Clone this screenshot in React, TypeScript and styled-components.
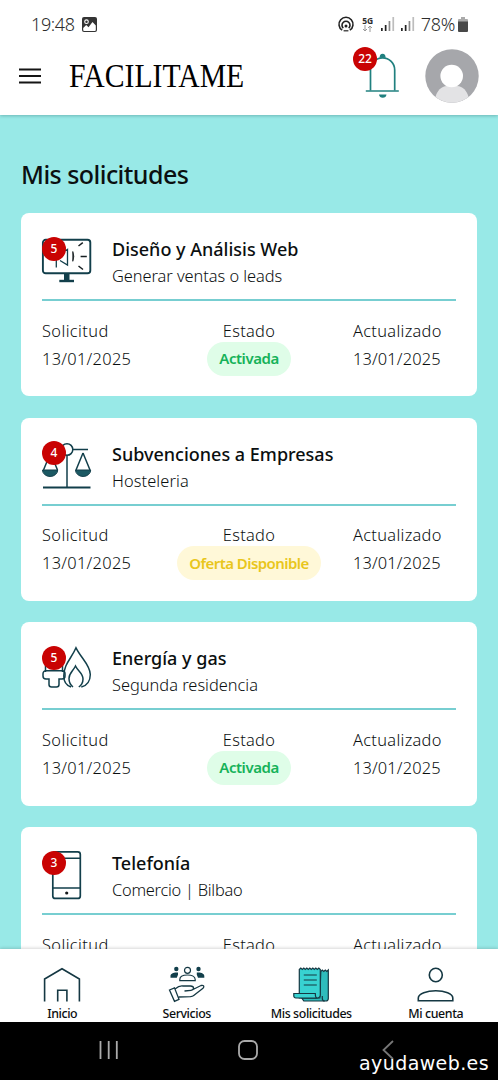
import React from "react";
import styled, { createGlobalStyle } from "styled-components";

const GlobalStyle = createGlobalStyle`
  *, *::before, *::after { box-sizing: border-box; }
  html, body { margin: 0; padding: 0; }
  body { font-family: "Noto Sans", "Open Sans", sans-serif; color: #0b0f10; overflow: hidden; }
  h1, h2, p { margin: 0; }
  svg { display: block; overflow: visible; flex: none; }
`;

const ink = "#123f4b";

const Screen = styled.div`
  width: 498px;
  height: 1080px;
  display: flex;
  flex-direction: column;
  overflow: hidden;
  background: #98e9e7;
`;

const TopArea = styled.header`
  flex: none;
  height: 115px;
  background: #fff;
  box-shadow: 0 1px 3px rgba(0, 60, 60, 0.28);
  z-index: 1;
`;

const StatusBar = styled.div`
  height: 48px;
  padding: 0 30px 0 31px;
  display: flex;
  align-items: center;
  color: #2c2c2c;
`;

const StatusText = styled.span<{ $gap?: number }>`
  font-size: 18px;
  font-weight: 300;
  line-height: 24px;
  letter-spacing: ${(p) => p.$gap ?? 0}px;
  white-space: nowrap;
`;

const StatusIcons = styled.div`
  margin-left: auto;
  display: flex;
  align-items: center;
`;

const Network = styled.div`
  width: 14px;
  margin: 0 6px 0 7px;
  display: flex;
  flex-direction: column;
  align-items: center;
  font-size: 8.5px;
  font-weight: 700;
  line-height: 8px;
`;

const AppBar = styled.div`
  height: 56px;
  padding: 0 19px;
  display: flex;
  align-items: center;
`;

const Brand = styled.h1`
  width: 176px;
  margin-left: 28px;
  font-family: "Liberation Serif", serif;
  font-size: 33px;
  font-weight: 400;
  line-height: 40px;
  color: #000;
  white-space: nowrap;
  transform: scaleX(0.9);
  transform-origin: left center;
`;

const BellButton = styled.button`
  position: relative;
  width: 36px;
  height: 46px;
  margin-left: auto;
  padding: 0;
  border: 0;
  background: none;
`;

const CountBadge = styled.span<{ $x: number; $y: number; $size: number }>`
  position: absolute;
  left: ${(p) => p.$x}px;
  top: ${(p) => p.$y}px;
  width: ${(p) => p.$size}px;
  height: ${(p) => p.$size}px;
  border-radius: 50%;
  display: flex;
  align-items: center;
  justify-content: center;
  background: #c90303;
  color: #fff;
  font-family: "Noto Sans", sans-serif;
  font-size: 12px;
  font-weight: 500;
  line-height: 1;
`;

const Avatar = styled.div`
  margin-left: 24.5px;
`;

const Content = styled.main`
  flex: 1;
  min-height: 0;
  overflow: hidden;
  padding: 42px 21px 0;
`;

const PageTitle = styled.h2`
  height: 56px;
  font-size: 25px;
  font-weight: 500;
  line-height: 34px;
  letter-spacing: -0.55px;
  white-space: nowrap;
`;

const CardList = styled.div`
  display: flex;
  flex-direction: column;
  gap: 21.4px;
`;

const Card = styled.article`
  flex: none;
  height: 183.3px;
  padding: 21px;
  border-radius: 8px;
  background: #fff;
`;

const CardHead = styled.div`
  height: 67px;
  padding-top: 3px;
  display: flex;
  gap: 20px;
  border-bottom: 2px solid #77ced1;
`;

const CardIcon = styled.div`
  position: relative;
  width: 50px;
  height: 50px;
`;

const CardTitles = styled.div`
  margin-top: -1px;
`;

const CardName = styled.p`
  font-size: 18px;
  font-weight: 500;
  line-height: 26px;
  white-space: nowrap;
`;

const CardDetail = styled.p<{ $track: number }>`
  font-size: 16.4px;
  font-weight: 300;
  line-height: 27px;
  letter-spacing: ${(p) => p.$track}px;
  white-space: nowrap;
`;

const CardFacts = styled.div`
  height: 74px;
  padding-top: 15.5px;
  display: grid;
  grid-template-columns: 89px 1fr 89px;
  padding-right: 14px;
`;

const Fact = styled.div<{ $center?: boolean }>`
  display: flex;
  flex-direction: column;
  align-items: ${(p) => (p.$center ? "center" : "flex-start")};
  margin-left: ${(p) => (p.$center ? "14px" : "0")};
`;

const FactLabel = styled.span<{ $track?: number }>`
  font-size: 16.4px;
  font-weight: 300;
  line-height: 28px;
  letter-spacing: ${(p) => p.$track ?? 0.3}px;
  white-space: nowrap;
`;

const StatusPill = styled.span<{ $offer: boolean }>`
  width: ${(p) => (p.$offer ? 144 : 84)}px;
  height: 34px;
  margin-top: -3px;
  padding-bottom: 1px;
  border-radius: 17px;
  display: flex;
  align-items: center;
  justify-content: center;
  background: ${(p) => (p.$offer ? "#fff8d8" : "#dffde8")};
  color: ${(p) => (p.$offer ? "#e9c61c" : "#16b259")};
  font-size: 15px;
  font-weight: 600;
  letter-spacing: ${(p) => (p.$offer ? -0.55 : -0.45)}px;
  white-space: nowrap;
`;

const BottomNav = styled.nav`
  flex: none;
  height: 73px;
  display: grid;
  grid-template-columns: repeat(4, 1fr);
  background: #fff;
  box-shadow: 0 -1px 3px rgba(0, 0, 0, 0.16);
  z-index: 1;
`;

const NavItem = styled.a`
  padding-top: 16px;
  display: flex;
  flex-direction: column;
  align-items: center;
  color: #0b0f10;
`;

const NavLabel = styled.span`
  margin-top: 3px;
  font-size: 12.4px;
  font-weight: 500;
  line-height: 16px;
  letter-spacing: -0.4px;
  white-space: nowrap;
`;

const SystemBar = styled.footer`
  position: relative;
  flex: none;
  height: 58px;
  padding: 18px 0 0 99px;
  display: flex;
  gap: 119px;
  background: #000;
`;

const BackKey = styled.div`
  margin-left: 5px;
`;

const Watermark = styled.span`
  position: absolute;
  right: 9px;
  top: 28px;
  color: #fff;
  font-family: "DejaVu Sans", sans-serif;
  font-size: 19px;
  line-height: 26px;
  letter-spacing: 0.4px;
  white-space: nowrap;
`;

const PictureIcon = () => (
  <svg width="15" height="15" viewBox="0 0 15 15" style={{ marginLeft: 7 }}>
    <rect width="15" height="15" rx="2" fill="#343434" />
    <circle cx="4.5" cy="4.7" r="1.8" fill="none" stroke="#fff" strokeWidth="1.1" />
    <path d="M1.2 11 4.2 8l2.3 2.2L10.5 5l3.3 3.5V13a1 1 0 0 1-1 1H2.2a1 1 0 0 1-1-1Z" fill="#fff" />
  </svg>
);

const HotspotIcon = () => (
  <svg width="16" height="15" viewBox="0 0 16 15" fill="none" stroke="#222" strokeWidth="1.6">
    <path d="M4.2 13.2a7 7 0 1 1 7.6 0" />
    <path d="M5.3 11.2a4 4 0 1 1 5.4 0" />
    <circle cx="8" cy="9" r="1.5" fill="#222" stroke="none" />
    <path d="M5.600 13.800h4.800" strokeWidth="1.200" />
  </svg>
);

const SignalIcon = ({ full }: { full: number }) => (
  <svg width="14" height="14" viewBox="0 0 14 14" style={{ marginRight: 6 }}>
    {[3, 6, 10, 14].map((h, i) => (
      <rect key={h} x={i * 3.8} y={14 - h} width="1.7" height={h} fill={i < full ? "#222" : i === 2 ? "#8a8a8a" : "#bdbdbd"} />
    ))}
  </svg>
);

const BatteryIcon = () => (
  <svg width="10" height="15" viewBox="0 0 10 15" style={{ marginLeft: 3 }}>
    <path d="M3 0h4v2h2a1 1 0 0 1 1 1v2H0V3a1 1 0 0 1 1-1h2Z" fill="#aaa" />
    <path d="M0 4.5h10V14a1 1 0 0 1-1 1H1a1 1 0 0 1-1-1Z" fill="#484848" />
  </svg>
);

const MenuIcon = () => (
  <svg width="22" height="16" viewBox="0 0 22 16" stroke="#151515" strokeWidth="2">
    <path d="M0 1.5h22M0 8h22M0 14.5h22" />
  </svg>
);

const BellIcon = () => (
  <svg width="36" height="46" viewBox="0 0 36 46" fill="none" stroke="#20807f" strokeWidth="1.7">
    <path d="M5.5 37.500V17a12.100 12.100 0 0 1 24.200 0v20.500" />
    <path d="M.8 38h33" />
    <path d="M14.600 4.800q0-4 3-4t3 4ZM14 41.500h7.500a3.800 3.800 0 0 1-7.500 0Z" fill="#20807f" stroke="none" />
  </svg>
);

const AvatarIcon = () => (
  <svg width="54" height="54" viewBox="0 0 54 54">
    <circle cx="27" cy="27" r="26.7" fill="#a6a7ab" />
    <path d="M10.5 48C12 42 16.2 37.2 22 37h10c5.800.2 10 5 11.500 11A26.700 26.700 0 0 1 10.500 48Z" fill="#e3e3e5" />
    <circle cx="26.700" cy="27" r="11.300" fill="#fff" />
  </svg>
);

const CardArt = ({ kind }: { kind: string }) => (
  <svg width="50" height="50" viewBox="0 0 50 50" fill="none" stroke={ink} strokeWidth="1.5">
    {kind === "web" && (
      <>
        <rect x=".9" y="2.800" width="47.400" height="33.500" rx="2.800" strokeWidth="1.900" />
        <path d="M22 37h5.500v6.500H22Z" fill={ink} stroke="none" />
        <path d="M17.300 44h14.700" strokeWidth="2.400" />
        <path d="M14.300 19v11.500M18 23.500l7.500 4.500V12.300L18 17" strokeWidth="1.300" />
        <path d="M30.800 14.500q2 5 0 9.800Z" fill="#161e21" stroke="#161e21" strokeWidth=".8" />
        <path d="M36.500 9l4.300-3.300M38.600 19.500h6.200M36.500 29l4.500 3.500" stroke="#161e21" />
      </>
    )}
    {kind === "grants" && (
      <>
        <circle cx="25" cy="7.500" r="5.800" />
        <path d="M25 13.300V45M31 7.500h15" />
        <path d="M1 45.500h47.500" strokeWidth="2" />
        <path d="M8.500 11 1.500 28M8.500 11l7 17M41 11l-7 17M41 11l7 17" />
        <path d="M.5 28h15.200a7.600 6.500 0 0 1-15.200 0ZM33.500 28h15.200a7.600 6.500 0 0 1-15.200 0Z" fill="#1b5963" stroke={ink} strokeWidth="1" />
      </>
    )}
    {kind === "energy" && (
      <>
        <path d="M3.500 14v12M12 14v8M20.500 14v12" />
        <path d="M4 24.700h16a3 3 0 0 1 3 3V30a3 3 0 0 1-3 3h-3v5.500a2.500 2.500 0 0 1-2.500 2.500h-5A2.500 2.500 0 0 1 7 38.500V33H4a3 3 0 0 1-3-3v-2.300a3 3 0 0 1 3-3Z" />
        <path d="M29 41c-4.500-1.500-7.200-5.500-7.200-11C21.800 18 29.500 12.500 34 1.800 39 12 48.300 19 48.300 28.500c0 6-3.200 11.200-9 12.500" />
        <path d="M31 41c-2.500-2-4-4.500-4-8.500 0-5.500 4.200-7.500 6.500-12.500 2.300 5 7.500 7.200 7.500 13 0 3.500-2 6.500-4.200 8" />
      </>
    )}
    {kind === "phone" && (
      <>
        <rect x="10.800" y=".9" width="27.500" height="46.500" rx="2.500" strokeWidth="1.700" />
        <path d="M11 7.300h27M11 37h27" />
        <circle cx="24.700" cy="42" r="1.600" fill="#15191b" stroke="none" />
      </>
    )}
  </svg>
);

const NavArt = ({ kind }: { kind: string }) => (
  <svg width="36" height="38" viewBox="0 0 36 38" fill="none" stroke="#153843" strokeWidth="1.600">
    {kind === "home" && <path d="M.6 36.500V14L18 3.700 35.400 14v22.500M13.700 36.500V25.300h9.200v11.200" />}
    {kind === "services" && (
      <>
        <g strokeWidth="1.200">
          <circle cx="18.500" cy="5.300" r="3" />
          <path d="M10.800 15.700v-1.200c0-3.500 4-4.500 7.700-4.500s7.700 1 7.700 4.500v1.200Z" />
        </g>
        <g fill={ink} stroke="none">
          <circle cx="7.300" cy="4" r="2.200" />
          <circle cx="29.500" cy="4" r="2.200" />
          <path d="M1.500 12.800V11c0-2.500 3.500-4 7.500-3.500v2.200L7.800 12.800ZM35.300 12.800V11c0-2.500-3.500-4-7.500-3.500v2.200l1.200 3.100Z" />
        </g>
        <path d="m.5 25 5-2.200 4.500 11.500-4.500 2ZM6 24c3-2.500 5-3.500 8-3h7.500c4 .1 4 4 .5 4.300l-6.500.7M24 24.500l8-4c2.500-.7 3.800 1 2 2.700l-9.300 7.300c-1 .8-2 1-3.200 1.200L9.800 32" strokeWidth="1.300" />
      </>
    )}
    {kind === "requests" && (
      <g strokeWidth="1.200" transform="translate(.8 .5)">
        <path d="m27 6 1.500-1.500L30 6l1.500-1.500L33 6l1.500-1.500V33a2.500 2.500 0 0 1-2.500 2.500H10l-2-3h18Z" fill="#2ebcbc" />
        <path d="M5.500 4 7 2.500 8.500 4 10 2.500 11.500 4 13 2.500 14.500 4 16 2.500 17.500 4 19 2.500 20.500 4 22 2.500 23.500 4 25 2.500 26.500 4v25.500a3 3 0 0 1-3 3H5.500Z" fill="#38d2d1" />
        <path d="M0 28h21.500c0 2.500.7 4.500 2 4.500H2a2 2 0 0 1-2-2Z" fill="#38d2d1" />
        <path d="M10 9.500h13M10 14.500h13M10 19.500h13M28.500 30.500v2.500q0 2.500 2.500 2.500" />
      </g>
    )}
    {kind === "account" && (
      <>
        <ellipse cx="17.800" cy="10" rx="6.500" ry="6.700" />
        <path d="M.3 35.700V33c0-4.500 8.700-7.300 17.500-7.300s17 2.800 17 7.300v2.700Z" />
      </>
    )}
  </svg>
);

const requests = [
  { kind: "web", count: 5, name: "Diseño y Análisis Web", detail: "Generar ventas o leads", status: "Activada", track: -0.05 },
  { kind: "grants", count: 4, name: "Subvenciones a Empresas", detail: "Hosteleria", status: "Oferta Disponible", track: 0.1 },
  { kind: "energy", count: 5, name: "Energía y gas", detail: "Segunda residencia", status: "Activada", track: 0 },
  { kind: "phone", count: 3, name: "Telefonía", detail: "Comercio | Bilbao", status: "Activada", track: -0.25 },
];

const navItems = [
  { kind: "home", label: "Inicio" },
  { kind: "services", label: "Servicios" },
  { kind: "requests", label: "Mis solicitudes" },
  { kind: "account", label: "Mi cuenta" },
];

export default function App() {
  return (
    <>
      <GlobalStyle />
      <Screen>
        <TopArea>
          <StatusBar>
            <StatusText $gap={-0.4}>19:48</StatusText>
            <PictureIcon />
            <StatusIcons>
              <HotspotIcon />
              <Network>
                <span>5G</span>
                <svg width="11" height="7" viewBox="0 0 11 7" fill="none" stroke="#999" strokeWidth="1">
                  <path d="M3 0v6M1 4l2 2 2-2M8 7V1M6 3l2-2 2 2" />
                </svg>
              </Network>
              <SignalIcon full={2} />
              <SignalIcon full={2} />
              <StatusText $gap={-0.3}>78%</StatusText>
              <BatteryIcon />
            </StatusIcons>
          </StatusBar>
          <AppBar>
            <MenuIcon />
            <Brand>FACILITAME</Brand>
            <BellButton aria-label="Notificaciones">
              <BellIcon />
              <CountBadge $x={-11.5} $y={-6} $size={24}>22</CountBadge>
            </BellButton>
            <Avatar>
              <AvatarIcon />
            </Avatar>
          </AppBar>
        </TopArea>
        <Content>
          <PageTitle>Mis solicitudes</PageTitle>
          <CardList>
            {requests.map((r) => (
              <Card key={r.kind}>
                <CardHead>
                  <CardIcon>
                    <CardArt kind={r.kind} />
                    <CountBadge $x={0} $y={-0.5} $size={24}>{r.count}</CountBadge>
                  </CardIcon>
                  <CardTitles>
                    <CardName>{r.name}</CardName>
                    <CardDetail $track={r.track}>{r.detail}</CardDetail>
                  </CardTitles>
                </CardHead>
                <CardFacts>
                  <Fact>
                    <FactLabel $track={0.4}>Solicitud</FactLabel>
                    <FactLabel>13/01/2025</FactLabel>
                  </Fact>
                  <Fact $center>
                    <FactLabel>Estado</FactLabel>
                    <StatusPill $offer={r.status !== "Activada"}>{r.status}</StatusPill>
                  </Fact>
                  <Fact>
                    <FactLabel>Actualizado</FactLabel>
                    <FactLabel $track={0.15}>13/01/2025</FactLabel>
                  </Fact>
                </CardFacts>
              </Card>
            ))}
          </CardList>
        </Content>
        <BottomNav>
          {navItems.map((n) => (
            <NavItem key={n.kind}>
              <NavArt kind={n.kind} />
              <NavLabel>{n.label}</NavLabel>
            </NavItem>
          ))}
        </BottomNav>
        <SystemBar>
          <svg width="20" height="20" viewBox="0 0 20 20" stroke="#aaa" strokeWidth="1.800">
            <path d="M1.500 1v18M9.700 1v18M17.800 1v18" />
          </svg>
          <svg width="20" height="20" viewBox="0 0 20 20" fill="none" stroke="#aaa" strokeWidth="1.800">
            <rect x="1" y="1" width="18" height="18" rx="5.500" />
          </svg>
          <BackKey>
            <svg width="12" height="20" viewBox="0 0 12 20" fill="none" stroke="#777" strokeWidth="1.800">
              <path d="M11 1 1.500 10 11 19" />
            </svg>
          </BackKey>
          <Watermark>ayudaweb.es</Watermark>
        </SystemBar>
      </Screen>
    </>
  );
}
